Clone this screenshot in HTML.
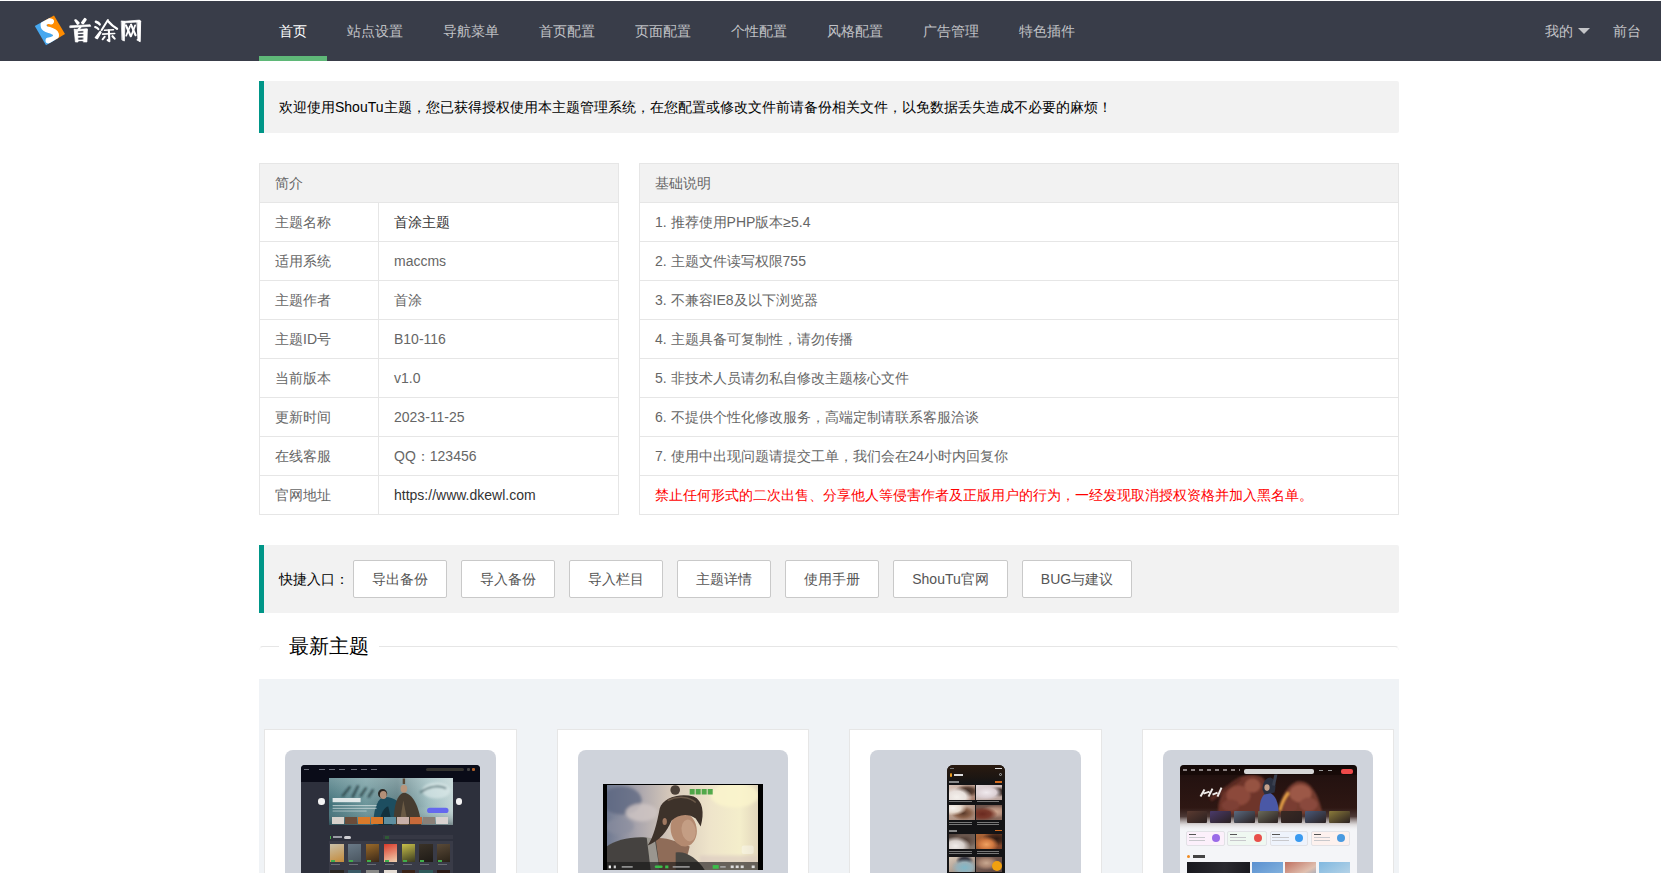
<!DOCTYPE html>
<html><head><meta charset="utf-8">
<style>
*{margin:0;padding:0;box-sizing:border-box}
html,body{width:1661px;height:873px;overflow:hidden;background:#fff}
body{font-family:"Liberation Sans",sans-serif;font-size:14px;color:#000;position:relative}
.hd{position:absolute;left:0;top:1px;width:1661px;height:60px;background:#393D49}
.logo{position:absolute;left:34px;top:14px;width:32px;height:32px}
.nav{position:absolute;left:259px;top:0;height:60px}
.nav a{position:absolute;top:0;height:60px;line-height:60px;color:rgba(255,255,255,.7);text-decoration:none;font-size:14px;text-align:center;white-space:nowrap}
.nav a.on{color:#fff}
.nav a.on:after{content:"";position:absolute;left:0;bottom:0;width:100%;height:5px;background:#5FB878}
.tri{position:absolute;left:1578px;top:28px;width:0;height:0;border-left:6px solid transparent;border-right:6px solid transparent;border-top:6px solid rgba(255,255,255,.7)}
.quote{position:absolute;left:259px;width:1140px;background:#f2f2f2;border-left:5px solid #009688;border-radius:0 2px 2px 0;padding:15px;line-height:22px;color:#000}
table{border-collapse:collapse;position:absolute;color:#666;font-size:14px}
td,th{border:1px solid #e6e6e6;padding:9px 15px;line-height:20px;text-align:left;font-weight:normal;height:39px}
th{background:#f2f2f2}
.btn{position:absolute;top:15px;height:38px;line-height:36px;border:1px solid #C9C9C9;background:#fff;color:#555;border-radius:2px;text-align:center;font-size:14px;white-space:nowrap}
.field{position:absolute;left:259px;top:646px;width:1140px;height:4px;border-top:1px solid #e6e6e6;border-left:1px solid #fafafa;border-right:1px solid #fafafa;border-radius:4px 4px 0 0}
.legend{position:absolute;left:279px;top:631px;padding:0 10px;background:#fff;font-size:20px;line-height:30px;color:#000;font-weight:300}
.gray{position:absolute;left:259px;top:679px;width:1140px;height:200px;background:#f0f3f6}
.card{position:absolute;top:729px;width:253px;height:200px;background:#fff;border:1px solid #e6e6e6}
.pan{position:absolute;top:750px;height:140px;background:#cfd3db;border-radius:8px;overflow:hidden}
</style></head><body>
<div class="hd"></div>
<!-- logo -->
<svg class="logo" style="left:30px;top:10px;width:40px;height:40px" viewBox="30 10 40 40">
<defs><clipPath id="sq"><polygon points="54,15.6 65,34 46,45.3 34.8,26"/></clipPath></defs>
<polygon points="44.4,20.8 54,15.6 65,34 55.5,39.65" fill="#FF8C00"/>
<polygon points="44.4,20.8 55.5,39.65 46,45.3 34.8,26" fill="#46A8F0"/>
<g clip-path="url(#sq)">
<path d="M51,21.5 C46.5,20 42.5,22.5 43.8,26.8 C45,30.5 54,29.5 55.8,34 C57,37.8 53,40.5 48.5,40.5" fill="none" stroke="#fff" stroke-width="6" stroke-linecap="round"/>
</g>
</svg>
<svg class="logotxt" style="position:absolute;left:66px;top:15px;width:80px;height:32px" viewBox="0 0 1661 664">
<g fill="#fff" stroke="#fff" stroke-linejoin="round" stroke-linecap="round">
<!-- 首 -->
<path d="M190,110 L205,110 L265,165 L240,185 Z" stroke-width="40"/>
<path d="M390,80 L410,95 L355,175 L330,160 Z" stroke-width="40"/>
<path d="M85,225 L500,200 L515,235 L85,262 Z" stroke-width="14"/>
<path d="M300,250 L255,305" stroke-width="40" fill="none"/>
<path d="M170,300 L195,560 L250,560 L240,330 Z" stroke-width="16"/>
<path d="M180,300 L430,285 L440,320 L230,335 Z" stroke-width="10"/>
<path d="M370,300 L445,288 L435,560 L365,560 Z" stroke-width="14"/>
<path d="M235,385 L385,378" stroke-width="34" fill="none"/>
<path d="M235,455 L385,450" stroke-width="34" fill="none"/>
<path d="M235,530 L385,525" stroke-width="34" fill="none"/>
<!-- 涂 -->
<path d="M620,140 Q680,160 700,195" stroke-width="50" fill="none"/>
<path d="M605,250 Q650,265 672,295" stroke-width="44" fill="none"/>
<path d="M610,470 L710,340 L725,360 L650,490 Z" stroke-width="30"/>
<path d="M870,105 L740,310" stroke-width="42" fill="none"/>
<path d="M880,135 Q960,230 1060,285" stroke-width="48" fill="none"/>
<path d="M800,318 L985,305" stroke-width="32" fill="none"/>
<path d="M760,398 L1010,385" stroke-width="34" fill="none"/>
<path d="M890,320 L900,545 L865,520" stroke-width="44" fill="none"/>
<path d="M805,450 L760,505" stroke-width="40" fill="none"/>
<path d="M965,440 L1010,490" stroke-width="44" fill="none"/>
<!-- 网 -->
<path d="M1155,125 L1225,135 L1212,540 L1168,520 Z" stroke-width="16"/>
<path d="M1165,135 L1530,105 L1555,140 L1210,165 Z" stroke-width="14"/>
<path d="M1480,130 L1550,125 L1540,555 L1470,515 L1490,500 Z" stroke-width="20"/>
<path d="M1245,215 L1345,440" stroke-width="44" fill="none"/>
<path d="M1330,230 L1250,430" stroke-width="36" fill="none"/>
<path d="M1350,200 L1445,420" stroke-width="44" fill="none"/>
<path d="M1435,215 L1355,430" stroke-width="36" fill="none"/>
</g></svg>
<div class="nav" style="left:0;top:1px">
<a class="on" style="left:259px;width:68px">首页</a>
<a style="left:327px;width:96px">站点设置</a>
<a style="left:423px;width:96px">导航菜单</a>
<a style="left:519px;width:96px">首页配置</a>
<a style="left:615px;width:96px">页面配置</a>
<a style="left:711px;width:96px">个性配置</a>
<a style="left:807px;width:96px">风格配置</a>
<a style="left:903px;width:96px">广告管理</a>
<a style="left:999px;width:96px">特色插件</a>
<a style="left:1525px;width:68px;text-align:left;padding-left:20px">我的</a>
<a style="left:1593px;width:68px">前台</a>
</div>
<div class="tri"></div>

<div class="quote" style="top:81px;height:52px">欢迎使用ShouTu主题，您已获得授权使用本主题管理系统，在您配置或修改文件前请备份相关文件，以免数据丢失造成不必要的麻烦！</div>

<table style="left:259px;top:163px;width:360px">
<tr><th colspan="2">简介</th></tr>
<tr><td style="width:119px">主题名称</td><td style="color:#333">首涂主题</td></tr>
<tr><td>适用系统</td><td>maccms</td></tr>
<tr><td>主题作者</td><td>首涂</td></tr>
<tr><td>主题ID号</td><td>B10-116</td></tr>
<tr><td>当前版本</td><td>v1.0</td></tr>
<tr><td>更新时间</td><td>2023-11-25</td></tr>
<tr><td>在线客服</td><td>QQ：123456</td></tr>
<tr><td>官网地址</td><td style="color:#333">https://www.dkewl.com</td></tr>
</table>

<table style="left:639px;top:163px;width:760px">
<tr><th>基础说明</th></tr>
<tr><td>1. 推荐使用PHP版本≥5.4</td></tr>
<tr><td>2. 主题文件读写权限755</td></tr>
<tr><td>3. 不兼容IE8及以下浏览器</td></tr>
<tr><td>4. 主题具备可复制性，请勿传播</td></tr>
<tr><td>5. 非技术人员请勿私自修改主题核心文件</td></tr>
<tr><td>6. 不提供个性化修改服务，高端定制请联系客服洽谈</td></tr>
<tr><td>7. 使用中出现问题请提交工单，我们会在24小时内回复你</td></tr>
<tr><td style="color:#FF0000">禁止任何形式的二次出售、分享他人等侵害作者及正版用户的行为，一经发现取消授权资格并加入黑名单。</td></tr>
</table>

<div class="quote" style="top:545px;height:68px;padding:0">
<span style="position:absolute;left:15px;top:23px;line-height:22px">快捷入口：</span>
<span class="btn" style="left:89px;width:94px">导出备份</span>
<span class="btn" style="left:197px;width:94px">导入备份</span>
<span class="btn" style="left:305px;width:94px">导入栏目</span>
<span class="btn" style="left:413px;width:94px">主题详情</span>
<span class="btn" style="left:521px;width:94px">使用手册</span>
<span class="btn" style="left:629px;width:115px">ShouTu官网</span>
<span class="btn" style="left:758px;width:110px">BUG与建议</span>
</div>

<div class="field"></div>
<div class="legend">最新主题</div>

<div class="gray"></div>
<div class="card" style="left:264px"></div>
<div class="card" style="left:557px;width:252px"></div>
<div class="card" style="left:849px"></div>
<div class="card" style="left:1142px;width:252px"></div>
<div class="pan" style="left:285px;width:211px"></div>
<div class="pan" style="left:578px;width:210px"></div>
<div class="pan" style="left:870px;width:211px"></div>
<div class="pan" style="left:1163px;width:210px"></div>
<!--THUMBS-->
<div style="position:absolute;left:301.2px;top:765.4px;width:178.7px;height:114.6px;background:#2d303c;border-radius:4px 4px 0 0"></div>
<div style="position:absolute;left:301.2px;top:765.4px;width:178.7px;height:16.6px;background:#0a0c18;border-radius:4px 4px 0 0"></div>
<div style="position:absolute;left:304.0px;top:768.6px;width:5.0px;height:1.4px;background:#6a6c78"></div>
<div style="position:absolute;left:319.0px;top:768.6px;width:6.0px;height:1.4px;background:#6a6c78"></div>
<div style="position:absolute;left:329.0px;top:768.6px;width:6.0px;height:1.4px;background:#6a6c78"></div>
<div style="position:absolute;left:339.0px;top:768.6px;width:6.0px;height:1.4px;background:#6a6c78"></div>
<div style="position:absolute;left:351.0px;top:768.6px;width:6.0px;height:1.4px;background:#6a6c78"></div>
<div style="position:absolute;left:361.0px;top:768.6px;width:6.0px;height:1.4px;background:#6a6c78"></div>
<div style="position:absolute;left:371.0px;top:768.6px;width:6.0px;height:1.4px;background:#6a6c78"></div>
<div style="position:absolute;left:425.5px;top:767.8px;width:38.5px;height:3.4px;background:#34332f;border-radius:2px"></div>
<div style="position:absolute;left:467.4px;top:768.4px;width:2.2px;height:2.2px;border-radius:50%;background:#444"></div>
<div style="position:absolute;left:472.4px;top:768.4px;width:2.2px;height:2.2px;border-radius:50%;background:#b0602a"></div>
<svg style="position:absolute;left:328.7px;top:777.5px;width:124px;height:47.2px" viewBox="328.7 777.5 124 47.2">
<defs>
<linearGradient id="b1" x1="0" x2="1" y1="0" y2="0">
<stop offset="0" stop-color="#3f6f78"/><stop offset=".3" stop-color="#6a9499"/><stop offset=".55" stop-color="#5a7a80"/><stop offset=".8" stop-color="#9dbcbf"/><stop offset="1" stop-color="#c4d6d6"/></linearGradient>
<linearGradient id="b1v" x1="0" x2="0" y1="0" y2="1">
<stop offset="0" stop-color="#d8e6e6" stop-opacity=".35"/><stop offset=".6" stop-color="#d8e6e6" stop-opacity="0"/><stop offset="1" stop-color="#1a2a30" stop-opacity=".45"/></linearGradient>
<filter id="bf" x="-20%" y="-20%" width="140%" height="140%"><feGaussianBlur stdDeviation="1.2"/></filter>
</defs>
<rect x="328.7" y="777.5" width="124" height="47.2" fill="url(#b1)"/>
<rect x="328.7" y="777.5" width="124" height="47.2" fill="url(#b1v)"/>
<g filter="url(#bf)">
<ellipse cx="436" cy="790" rx="14" ry="8" fill="#e0ecec" opacity=".6"/>
<path d="M420,792 C428,786 438,784 446,788" stroke="#3a5a60" stroke-width="1.6" fill="none" opacity=".8"/>
<path d="M342,796 L350,786 M352,797 L358,785 M360,796 L366,787 M368,797 L373,789" stroke="#1e3438" stroke-width="2" opacity=".85"/>
</g>
<path d="M373,824.7 C373,812 376,800 382,797 C390,795 400,800 404,810 L406,824.7 Z" fill="#1d4e60"/>
<path d="M378,824.7 C380,814 384,806 388,806 L392,824.7 Z" fill="#12303c"/>
<path d="M393.5,824.7 C393,808 396,794 403.5,792 C412,793 419,805 421,824.7 Z" fill="#463c30"/>
<path d="M399,824.7 L403,800 L408,824.7 Z" fill="#6a5a44"/>
<circle cx="382.3" cy="793.2" r="4.6" fill="#2a2622"/>
<ellipse cx="383" cy="794.5" rx="3.4" ry="4" fill="#b39078"/>
<ellipse cx="403.6" cy="788.2" rx="3.3" ry="4" fill="#b8967c"/>
<rect x="402.4" y="778" width="2.4" height="5.5" fill="#5a4a38"/>
<rect x="332.3" y="797.5" width="28" height="4.2" fill="#eef2f2" opacity=".9"/>
<rect x="332.3" y="804.6" width="44" height="1.1" fill="#e4eaea" opacity=".7"/>
<rect x="332.3" y="807.3" width="44" height="1.1" fill="#e4eaea" opacity=".6"/>
<rect x="332.3" y="810" width="34" height="1.1" fill="#e4eaea" opacity=".5"/>
<rect x="426.8" y="807.2" width="21.4" height="5.3" rx="2.6" fill="#6468ee"/>
</svg>
<div style="position:absolute;left:332.3px;top:817.0px;width:11.8px;height:6.7px;background:#d8d2cc"></div>
<div style="position:absolute;left:345.3px;top:817.0px;width:11.8px;height:6.7px;background:#6a4c3a"></div>
<div style="position:absolute;left:358.3px;top:817.0px;width:11.8px;height:6.7px;background:#d97a2a"></div>
<div style="position:absolute;left:371.3px;top:817.0px;width:11.8px;height:6.7px;background:#d9782a"></div>
<div style="position:absolute;left:384.3px;top:817.0px;width:11.8px;height:6.7px;background:#5f8fa0"></div>
<div style="position:absolute;left:397.3px;top:817.0px;width:11.8px;height:6.7px;background:#c8b0a8"></div>
<div style="position:absolute;left:410.3px;top:817.0px;width:11.8px;height:6.7px;background:#c86a3a"></div>
<div style="position:absolute;left:423.3px;top:817.0px;width:11.8px;height:6.7px;background:#8a8078"></div>
<div style="position:absolute;left:436.3px;top:817.0px;width:11.8px;height:6.7px;background:#d8d2d0"></div>
<div style="position:absolute;left:318.0px;top:798.1px;width:6.6px;height:6.6px;border-radius:50%;background:#f4f4f4"></div>
<div style="position:absolute;left:455.9px;top:798.1px;width:6.6px;height:6.6px;border-radius:50%;background:#f4f4f4"></div>
<div style="position:absolute;left:329.5px;top:835.5px;width:1.0px;height:3.0px;background:#4caf50"></div>
<div style="position:absolute;left:333.0px;top:836.0px;width:9.0px;height:2.0px;background:#9a9ca6"></div>
<div style="position:absolute;left:343.5px;top:835.5px;width:7.5px;height:3.3px;background:#d0d0d4;border-radius:2px"></div>
<div style="position:absolute;left:383.4px;top:835.0px;width:69.3px;height:4.2px;background:#363844"></div>
<div style="position:absolute;left:384.5px;top:835.6px;width:4.5px;height:3.0px;background:#2f5a36"></div>
<div style="position:absolute;left:328.7px;top:841.3px;width:124.0px;height:38.7px;background:#393b47"></div>
<div style="position:absolute;left:330.4px;top:843.9px;width:13.3px;height:18.4px;background:linear-gradient(160deg,#c9c0a8,#c48a3a)"></div>
<div style="position:absolute;left:331.4px;top:860.0px;width:4.0px;height:1.5px;background:#3fae4a"></div>
<div style="position:absolute;left:331.4px;top:863.6px;width:9.0px;height:1.4px;background:#6a6c76"></div>
<div style="position:absolute;left:330.4px;top:869.8px;width:13.3px;height:10.2px;background:#2a2622"></div>
<div style="position:absolute;left:348.2px;top:843.9px;width:13.3px;height:18.4px;background:linear-gradient(160deg,#6a7a88,#4a5660)"></div>
<div style="position:absolute;left:349.2px;top:860.0px;width:4.0px;height:1.5px;background:#3fae4a"></div>
<div style="position:absolute;left:349.2px;top:863.6px;width:9.0px;height:1.4px;background:#6a6c76"></div>
<div style="position:absolute;left:348.2px;top:869.8px;width:13.3px;height:10.2px;background:#3a5a66"></div>
<div style="position:absolute;left:366.0px;top:843.9px;width:13.3px;height:18.4px;background:linear-gradient(160deg,#9a6a2a,#3a2818)"></div>
<div style="position:absolute;left:367.0px;top:860.0px;width:4.0px;height:1.5px;background:#3fae4a"></div>
<div style="position:absolute;left:367.0px;top:863.6px;width:9.0px;height:1.4px;background:#6a6c76"></div>
<div style="position:absolute;left:366.0px;top:869.8px;width:13.3px;height:10.2px;background:#8a8a88"></div>
<div style="position:absolute;left:383.8px;top:843.9px;width:13.3px;height:18.4px;background:linear-gradient(160deg,#d83a2a,#f0d0b0)"></div>
<div style="position:absolute;left:384.8px;top:860.0px;width:4.0px;height:1.5px;background:#3fae4a"></div>
<div style="position:absolute;left:384.8px;top:863.6px;width:9.0px;height:1.4px;background:#6a6c76"></div>
<div style="position:absolute;left:383.8px;top:869.8px;width:13.3px;height:10.2px;background:#e4dcd4"></div>
<div style="position:absolute;left:401.6px;top:843.9px;width:13.3px;height:18.4px;background:linear-gradient(160deg,#c8c04a,#3a3a20)"></div>
<div style="position:absolute;left:402.6px;top:860.0px;width:4.0px;height:1.5px;background:#3fae4a"></div>
<div style="position:absolute;left:402.6px;top:863.6px;width:9.0px;height:1.4px;background:#6a6c76"></div>
<div style="position:absolute;left:401.6px;top:869.8px;width:13.3px;height:10.2px;background:#3a2418"></div>
<div style="position:absolute;left:419.4px;top:843.9px;width:13.3px;height:18.4px;background:linear-gradient(160deg,#3a3228,#1e1a16)"></div>
<div style="position:absolute;left:420.4px;top:860.0px;width:4.0px;height:1.5px;background:#3fae4a"></div>
<div style="position:absolute;left:420.4px;top:863.6px;width:9.0px;height:1.4px;background:#6a6c76"></div>
<div style="position:absolute;left:419.4px;top:869.8px;width:13.3px;height:10.2px;background:#2f5a5a"></div>
<div style="position:absolute;left:437.2px;top:843.9px;width:13.3px;height:18.4px;background:linear-gradient(160deg,#5a4a38,#2a2218)"></div>
<div style="position:absolute;left:438.2px;top:860.0px;width:4.0px;height:1.5px;background:#3fae4a"></div>
<div style="position:absolute;left:438.2px;top:863.6px;width:9.0px;height:1.4px;background:#6a6c76"></div>
<div style="position:absolute;left:437.2px;top:869.8px;width:13.3px;height:10.2px;background:#2a1a16"></div>
<div style="position:absolute;left:602.9px;top:784.0px;width:160.0px;height:86.0px;background:#000"></div>
<svg style="position:absolute;left:607.3px;top:784.5px;width:151.2px;height:85px" viewBox="607.3 784.5 151.2 85">
<defs>
<linearGradient id="sky" x1="0" x2="1" y1="0" y2="0">
<stop offset="0" stop-color="#707a92"/><stop offset=".2" stop-color="#a8a4ac"/><stop offset=".42" stop-color="#d6c8ba"/><stop offset=".68" stop-color="#eee4ca"/><stop offset=".88" stop-color="#f4eecb"/><stop offset="1" stop-color="#e2d6bc"/></linearGradient>
<filter id="bl" x="-20%" y="-20%" width="140%" height="140%"><feGaussianBlur stdDeviation="1.6"/></filter>
<filter id="bl2" x="-20%" y="-20%" width="140%" height="140%"><feGaussianBlur stdDeviation="0.6"/></filter>
</defs>
<rect x="607.3" y="784.5" width="151.2" height="85" fill="url(#sky)"/>
<g filter="url(#bl)">
<ellipse cx="622" cy="800" rx="20" ry="14" fill="#5c6680" opacity=".75"/>
<ellipse cx="642" cy="812" rx="16" ry="9" fill="#cfc6c4" opacity=".8"/>
<ellipse cx="620" cy="826" rx="14" ry="8" fill="#8a8e9e" opacity=".6"/>
<ellipse cx="735" cy="795" rx="24" ry="12" fill="#fbf5cc" opacity=".8"/>
<rect x="700" y="855" width="58" height="14" fill="#d8c8c0" opacity=".6"/>
</g>
<g filter="url(#bl2)">
<path d="M607,846 C615,840 630,836 646,837 C660,839 672,852 682,869.5 L607.3,869.5 Z" fill="#45433f"/>
<path d="M656,838 C664,836 680,842 690,846 L684,869.5 L660,869.5 Z" fill="#8f6c58"/>
<path d="M647,837 L655,838 L660,869.5 L651,869.5 Z" fill="#9a968f"/>
<path d="M676,852 C686,850 698,858 705,869.5 L676,869.5 Z" fill="#4a4642"/>
<ellipse cx="684" cy="829" rx="13" ry="17" transform="rotate(-10 684 829)" fill="#b48a70"/>
<ellipse cx="689" cy="830" rx="7" ry="11" transform="rotate(-10 689 830)" fill="#c8a28a" opacity=".8"/>
<path d="M660,808 C663,797 680,792 694,796 C703,800 705,812 701,826 L696,818 C688,812 678,814 672,820 C668,828 664,838 648,845 C654,836 657,824 660,808 Z" fill="#3d312a"/>
<path d="M668,800 C678,795 690,796 696,802" stroke="#6a5848" stroke-width="1.5" fill="none"/>
<ellipse cx="665" cy="821" rx="2.2" ry="3.5" fill="#a07860"/>
<circle cx="675.5" cy="789.5" r="4.8" fill="#4c3f38"/>
</g>
<rect x="690" y="788.5" width="5" height="5.5" fill="#2a9a2a" opacity=".8"/><rect x="696" y="788.5" width="5" height="5.5" fill="#2a9a2a" opacity=".8"/><rect x="702" y="788.5" width="5" height="5.5" fill="#2a9a2a" opacity=".8"/><rect x="708" y="788.5" width="5" height="5.5" fill="#2a9a2a" opacity=".8"/>
<rect x="742" y="845" width="12" height="8.6" rx="2" fill="#fff" opacity=".35"/>
<rect x="607.3" y="861.5" width="151.2" height="8" fill="#141414" opacity=".6"/>
<rect x="609" y="865" width="2.2" height="2.8" fill="#fff"/>
<rect x="614" y="865" width="2.2" height="2.8" fill="#ccc"/>
<rect x="622" y="865.6" width="11" height="1.6" fill="#999"/>
<rect x="655" y="865" width="8" height="2.6" rx="1.3" fill="#3bbf4a"/>
<rect x="665.5" y="865" width="3.2" height="2.8" fill="#3bbf4a"/>
<rect x="673" y="865.6" width="17" height="1.6" fill="#999"/>
<rect x="713" y="864.6" width="6" height="3.6" fill="#3bbf4a"/>
<rect x="720.5" y="865.6" width="5.5" height="1.6" fill="#aaa"/>
<rect x="731" y="865" width="3" height="2.6" fill="#ddd"/><rect x="736" y="865" width="3" height="2.6" fill="#ddd"/><rect x="741" y="865" width="3" height="2.6" fill="#ddd"/><rect x="752" y="865" width="3" height="2.6" fill="#ddd"/>
</svg>
<div style="position:absolute;left:946.5px;top:764.5px;width:58.1px;height:115.5px;background:#141416;border-radius:6px 6px 0 0;overflow:hidden"></div>
<div style="position:absolute;left:946.5px;top:764.5px;width:58.1px;height:18.5px;background:linear-gradient(180deg,#2a1a10,#1c1612 70%,#141416);border-radius:6px 6px 0 0"></div>
<div style="position:absolute;left:950.0px;top:768.0px;width:4.0px;height:1.0px;background:#777"></div>
<div style="position:absolute;left:995.0px;top:767.8px;width:7.0px;height:1.4px;background:#ddd"></div>
<div style="position:absolute;left:949.8px;top:772.5px;width:2.4px;height:4.0px;background:#f0a020;border-radius:50% 50% 40% 40%"></div>
<div style="position:absolute;left:953.5px;top:773.5px;width:9.5px;height:2.3px;background:#ddd"></div>
<div style="position:absolute;left:999.0px;top:773.0px;width:3.0px;height:3.0px;border:1px solid #aaa;border-radius:50%"></div>
<div style="position:absolute;left:949.0px;top:781.0px;width:10.0px;height:2.0px;background:#888"></div>
<div style="position:absolute;left:995.0px;top:781.3px;width:7.0px;height:1.3px;background:#d06a20"></div>
<div style="position:absolute;left:949.0px;top:829.5px;width:8.0px;height:2.3px;background:#888"></div>
<div style="position:absolute;left:995.0px;top:830.0px;width:7.0px;height:1.3px;background:#d06a20"></div>
<div style="position:absolute;left:948.9px;top:785.0px;width:26.2px;height:14.6px;background:radial-gradient(ellipse at 30% 80%,#f4f0ec 0,#e8e0dc 35%,rgba(0,0,0,0) 60%),radial-gradient(ellipse at 70% 40%,#3a2a24 0,#5a4034 25%,rgba(0,0,0,0) 50%),linear-gradient(150deg,#d8c4b8,#a88070)"></div>
<div style="position:absolute;left:976.0px;top:785.0px;width:26.2px;height:14.6px;background:radial-gradient(ellipse at 40% 50%,#f0eaee 0,#dcd0d4 45%,rgba(0,0,0,0) 70%),radial-gradient(ellipse at 85% 45%,#2a2020 0,#4a3a34 20%,rgba(0,0,0,0) 45%),linear-gradient(150deg,#e0d8dc,#b8a098)"></div>
<div style="position:absolute;left:948.9px;top:805.0px;width:26.2px;height:14.6px;background:radial-gradient(ellipse at 15% 20%,#f8f4f0 0,#e8dcd0 25%,rgba(0,0,0,0) 45%),radial-gradient(ellipse at 55% 55%,#5a3a2a 0,#8a6048 35%,rgba(0,0,0,0) 60%),linear-gradient(150deg,#c8b0a0,#a08070)"></div>
<div style="position:absolute;left:976.0px;top:805.0px;width:26.2px;height:14.6px;background:radial-gradient(ellipse at 25% 60%,#6a2a20 0,#7a3a2c 30%,rgba(0,0,0,0) 55%),radial-gradient(ellipse at 75% 45%,#d0a890 0,#b08a78 30%,rgba(0,0,0,0) 55%),linear-gradient(150deg,#6a5048,#8a6a5c)"></div>
<div style="position:absolute;left:948.9px;top:834.0px;width:26.2px;height:14.9px;background:radial-gradient(ellipse at 25% 80%,#f0ecea 0,#d8d0cc 30%,rgba(0,0,0,0) 55%),radial-gradient(ellipse at 60% 40%,#4a3830 0,#6a564c 35%,rgba(0,0,0,0) 60%),linear-gradient(150deg,#4a3c36,#8a7a70)"></div>
<div style="position:absolute;left:976.0px;top:834.0px;width:26.2px;height:14.9px;background:radial-gradient(ellipse at 40% 70%,#f0a060 0,#d07840 30%,rgba(0,0,0,0) 55%),radial-gradient(ellipse at 80% 30%,#2a1a14 0,#4a2a1c 25%,rgba(0,0,0,0) 50%),linear-gradient(150deg,#b06838,#7a4028)"></div>
<div style="position:absolute;left:948.9px;top:857.0px;width:26.2px;height:14.5px;background:radial-gradient(ellipse at 60% 70%,#80b8c8 0,#98b0b8 35%,rgba(0,0,0,0) 60%),radial-gradient(ellipse at 60% 25%,#2a2a34 0,#3a3a44 20%,rgba(0,0,0,0) 40%),linear-gradient(150deg,#d8c8b8,#8a7a70)"></div>
<div style="position:absolute;left:976.0px;top:857.0px;width:26.2px;height:14.5px;background:radial-gradient(ellipse at 40% 40%,#c8a890 0,#a88470 30%,rgba(0,0,0,0) 55%),linear-gradient(150deg,#806458,#5a4440)"></div>
<div style="position:absolute;left:949.0px;top:801.0px;width:23.0px;height:1.2px;background:#777"></div>
<div style="position:absolute;left:976.5px;top:801.0px;width:22.5px;height:1.2px;background:#777"></div>
<div style="position:absolute;left:949.0px;top:821.5px;width:23.0px;height:1.2px;background:#777"></div>
<div style="position:absolute;left:976.5px;top:821.5px;width:22.5px;height:1.2px;background:#777"></div>
<div style="position:absolute;left:949.0px;top:823.8px;width:23.0px;height:1.2px;background:#777"></div>
<div style="position:absolute;left:976.5px;top:823.8px;width:22.5px;height:1.2px;background:#777"></div>
<div style="position:absolute;left:949.0px;top:850.5px;width:23.0px;height:1.2px;background:#777"></div>
<div style="position:absolute;left:976.5px;top:850.5px;width:22.5px;height:1.2px;background:#777"></div>
<div style="position:absolute;left:949.0px;top:852.8px;width:23.0px;height:1.2px;background:#777"></div>
<div style="position:absolute;left:976.5px;top:852.8px;width:22.5px;height:1.2px;background:#777"></div>
<div style="position:absolute;left:992.2px;top:860.8px;width:10.0px;height:10.0px;border-radius:50%;background:#f0a010"></div>
<div style="position:absolute;left:1179.5px;top:765.4px;width:177.3px;height:114.6px;background:#f4f5f8;border-radius:4px 4px 0 0;overflow:hidden"></div>
<svg style="position:absolute;left:1179.5px;top:765.4px;width:177.3px;height:66px;border-radius:4px 4px 0 0" viewBox="1179.5 765.4 177.3 66">
<defs>
<linearGradient id="d4" x1="0" x2="0" y1="0" y2="1">
<stop offset="0" stop-color="#140a08"/><stop offset=".2" stop-color="#241210"/><stop offset=".65" stop-color="#2e1713"/><stop offset=".78" stop-color="#3a2420" stop-opacity=".9"/><stop offset=".9" stop-color="#c9c2c2" stop-opacity=".6"/><stop offset="1" stop-color="#f4f5f8" stop-opacity="0"/></linearGradient>
<filter id="m4" x="-20%" y="-20%" width="140%" height="140%"><feGaussianBlur stdDeviation="1.3"/></filter>
</defs>
<rect x="1179.5" y="765.4" width="177.3" height="66" fill="url(#d4)"/>
<g filter="url(#m4)">
<path d="M1218,815 C1216,802 1222,790 1232,782 C1240,776 1252,772 1262,778 C1270,786 1270,800 1266,815 Z" fill="#6e3429"/>
<ellipse cx="1238" cy="796" rx="12" ry="10" fill="#8c4a3b"/>
<ellipse cx="1252" cy="786" rx="8" ry="7" fill="#9a5645" opacity=".9"/>
<ellipse cx="1230" cy="806" rx="9" ry="6" fill="#7e4034"/>
<path d="M1240,779 L1210,800" stroke="#5a2a22" stroke-width="4" fill="none"/>
<path d="M1279,815 C1278,802 1284,788 1296,782 C1308,779 1318,792 1322,815 Z" fill="#733a2e"/>
<ellipse cx="1300" cy="794" rx="11" ry="9" fill="#9c5847"/>
<ellipse cx="1308" cy="805" rx="9" ry="7" fill="#8a4a3c"/>
<ellipse cx="1290" cy="806" rx="7" ry="6" fill="#7a3e32"/>
<path d="M1279,811 C1281,803 1284,798 1288,793" stroke="#f0a848" stroke-width="2.6" fill="none"/>
</g>
<path d="M1259,812 C1259,800 1262,794 1268,793 C1274,794 1278,802 1278,812 Z" fill="#4a58a6"/>
<path d="M1262,790 C1262,782 1266,778 1270,778 C1275,780 1276,786 1274,793 L1264,795 Z" fill="#2a3040"/>
<ellipse cx="1266.5" cy="788" rx="2.6" ry="3.3" fill="#c4a28c"/>
<rect x="1273" y="772" width="3" height="14" fill="#3a4050" transform="rotate(12 1274 779)"/>
<path d="M1200,797 L1204,790 M1203,794 L1209,792 M1208,797 L1212,789 M1212,795 L1217,793 M1217,797 L1221,788" stroke="#eeeae8" stroke-width="2" fill="none"/>
<rect x="1179.5" y="765.4" width="177.3" height="10" fill="#120806" opacity=".55"/>
</svg>
<div style="position:absolute;left:1183.0px;top:769.2px;width:57.0px;height:1.6px;background:repeating-linear-gradient(90deg,#8a8080 0 4px,transparent 4px 8px)"></div>
<div style="position:absolute;left:1244.2px;top:768.8px;width:69.9px;height:4.8px;background:#d6d6d6;border-radius:2px"></div>
<div style="position:absolute;left:1319.0px;top:769.8px;width:18.0px;height:1.4px;background:repeating-linear-gradient(90deg,#9a9a9a 0 4px,transparent 4px 9px)"></div>
<div style="position:absolute;left:1341.0px;top:769.0px;width:12.3px;height:4.5px;background:#ee4a4a;border-radius:2px"></div>
<div style="position:absolute;left:1186.6px;top:811.1px;width:20.1px;height:11.7px;background:linear-gradient(150deg,#5a3a30,#2a2020);border-radius:1px"></div>
<div style="position:absolute;left:1210.2px;top:811.1px;width:20.7px;height:11.7px;background:linear-gradient(150deg,#4a3a6a,#2a2020);border-radius:1px"></div>
<div style="position:absolute;left:1234.1px;top:811.1px;width:20.5px;height:11.7px;background:linear-gradient(150deg,#5a6a80,#2a2020);border-radius:1px"></div>
<div style="position:absolute;left:1257.8px;top:811.1px;width:20.7px;height:11.7px;background:linear-gradient(150deg,#6a6a5a,#2a2020);border-radius:1px"></div>
<div style="position:absolute;left:1281.4px;top:811.1px;width:20.4px;height:11.7px;background:linear-gradient(150deg,#3a2a24,#2a2020);border-radius:1px"></div>
<div style="position:absolute;left:1305.1px;top:811.1px;width:20.7px;height:11.7px;background:linear-gradient(150deg,#4a5a7a,#2a2020);border-radius:1px"></div>
<div style="position:absolute;left:1328.7px;top:811.1px;width:21.0px;height:11.7px;background:linear-gradient(150deg,#8a7a3a,#2a2020);border-radius:1px"></div>
<div style="position:absolute;left:1186.4px;top:830.5px;width:38.4px;height:15.6px;background:#fcf0fb;border:1px solid #e2e2e6;border-radius:2px"></div>
<div style="position:absolute;left:1188.9px;top:833.5px;width:7.5px;height:1.5px;background:#555"></div>
<div style="position:absolute;left:1188.9px;top:837.0px;width:16.5px;height:1.0px;background:#c8c8cc"></div>
<div style="position:absolute;left:1188.9px;top:840.0px;width:16.5px;height:1.0px;background:#c8c8cc"></div>
<div style="position:absolute;left:1211.8px;top:834.3px;width:8.0px;height:8.0px;border-radius:50%;background:#9a6ae8"></div>
<div style="position:absolute;left:1227.4px;top:830.5px;width:39.5px;height:15.6px;background:#eff8f1;border:1px solid #e2e2e6;border-radius:2px"></div>
<div style="position:absolute;left:1229.9px;top:833.5px;width:7.5px;height:1.5px;background:#555"></div>
<div style="position:absolute;left:1229.9px;top:837.0px;width:16.5px;height:1.0px;background:#c8c8cc"></div>
<div style="position:absolute;left:1229.9px;top:840.0px;width:16.5px;height:1.0px;background:#c8c8cc"></div>
<div style="position:absolute;left:1253.9px;top:834.3px;width:8.0px;height:8.0px;border-radius:50%;background:#e8504a"></div>
<div style="position:absolute;left:1269.5px;top:830.5px;width:38.8px;height:15.6px;background:#eef3fc;border:1px solid #e2e2e6;border-radius:2px"></div>
<div style="position:absolute;left:1272.0px;top:833.5px;width:7.5px;height:1.5px;background:#555"></div>
<div style="position:absolute;left:1272.0px;top:837.0px;width:16.5px;height:1.0px;background:#c8c8cc"></div>
<div style="position:absolute;left:1272.0px;top:840.0px;width:16.5px;height:1.0px;background:#c8c8cc"></div>
<div style="position:absolute;left:1295.3px;top:834.3px;width:8.0px;height:8.0px;border-radius:50%;background:#3a9af0"></div>
<div style="position:absolute;left:1311.1px;top:830.5px;width:38.6px;height:15.6px;background:#fdf1ee;border:1px solid #e2e2e6;border-radius:2px"></div>
<div style="position:absolute;left:1313.6px;top:833.5px;width:7.5px;height:1.5px;background:#555"></div>
<div style="position:absolute;left:1313.6px;top:837.0px;width:16.5px;height:1.0px;background:#c8c8cc"></div>
<div style="position:absolute;left:1313.6px;top:840.0px;width:16.5px;height:1.0px;background:#c8c8cc"></div>
<div style="position:absolute;left:1336.7px;top:834.3px;width:8.0px;height:8.0px;border-radius:50%;background:#4a9ae0"></div>
<div style="position:absolute;left:1186.5px;top:854.7px;width:3.0px;height:3.0px;border-radius:50%;background:#f08a20"></div>
<div style="position:absolute;left:1192.5px;top:855.0px;width:12.0px;height:2.5px;background:#444"></div>
<div style="position:absolute;left:1186.6px;top:862.2px;width:63.2px;height:17.8px;background:linear-gradient(90deg,#18181e,#2a2a30 60%,#1a1a20)"></div>
<div style="position:absolute;left:1252.0px;top:862.2px;width:31.0px;height:17.8px;background:linear-gradient(150deg,#5a90d0,#8ab8e0)"></div>
<div style="position:absolute;left:1285.3px;top:862.2px;width:30.7px;height:17.8px;background:linear-gradient(150deg,#c07060,#e0c0b0 60%,#80a0c0)"></div>
<div style="position:absolute;left:1318.7px;top:862.2px;width:31.0px;height:17.8px;background:linear-gradient(150deg,#80b8e0,#c0d8e8)"></div>
<!--/THUMBS-->
</body></html>
